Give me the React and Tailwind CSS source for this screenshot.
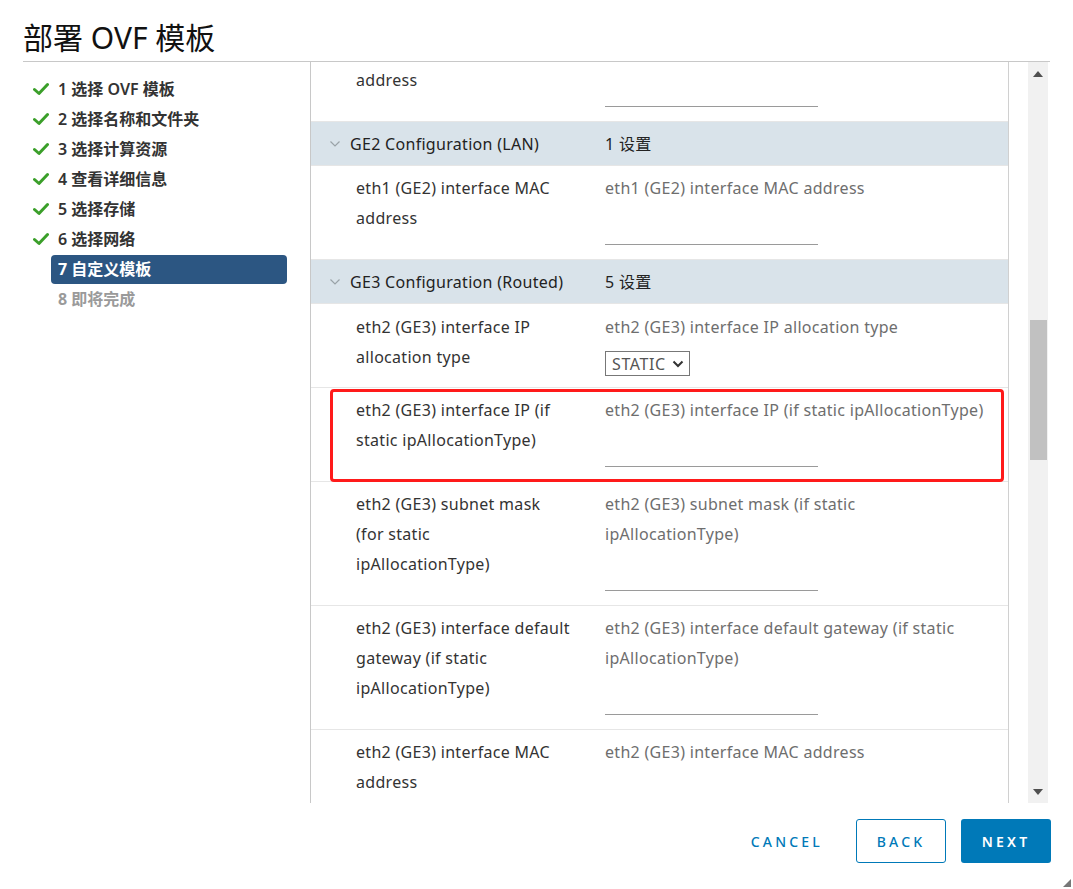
const font = { fontFamily: '"Noto Sans", "Noto Sans CJK SC", sans-serif' };

function Check() {
  return (
    <svg width="16" height="14" viewBox="0 0 16 14" className="shrink-0">
      <path d="M1.5 7.5 L6 11.5 L14.5 2.5" fill="none" stroke="#3b9f2a" strokeWidth="3" strokeLinecap="round" strokeLinejoin="round" />
    </svg>
  );
}

function Chevron() {
  return (
    <svg width="12" height="8" viewBox="0 0 12 8" className="shrink-0">
      <path d="M1.5 1.5 L6 6 L10.5 1.5" fill="none" stroke="#9aa3a8" strokeWidth="1.2" />
    </svg>
  );
}

const steps = [
  { n: 1, t: '选择 OVF 模板', done: true },
  { n: 2, t: '选择名称和文件夹', done: true },
  { n: 3, t: '选择计算资源', done: true },
  { n: 4, t: '查看详细信息', done: true },
  { n: 5, t: '选择存储', done: true },
  { n: 6, t: '选择网络', done: true },
  { n: 7, t: '自定义模板', active: true },
  { n: 8, t: '即将完成', todo: true },
];

function Lines({ items }) {
  return items.map((l, i) => (
    <div key={i} className="whitespace-nowrap">{l}</div>
  ));
}

function Field({ label, desc }) {
  return (
    <div className="flex border-b border-[#e6e6e6] pt-[7px] pb-[14px]">
      <div className="w-[294px] shrink-0 pl-[45px] text-[#333] leading-[30px]">
        <Lines items={label} />
      </div>
      <div className="flex-1">
        <div className="text-[#6e6e6e] leading-[30px]">
          <Lines items={desc} />
        </div>
        <div className="h-[42px] w-[213px] border-b border-[#9a9a9a]" />
      </div>
    </div>
  );
}

function Header({ title, count }) {
  return (
    <div className="flex h-[44px] items-center bg-[#d9e3ea] border-b border-[#e6e6e6]">
      <div className="w-[294px] shrink-0 flex items-center pl-[18px]">
        <Chevron />
        <span className="ml-[9px] text-[#222]">{title}</span>
      </div>
      <div className="text-[#222]">{count}</div>
    </div>
  );
}

export default function App() {
  return (
    <div className="w-[1073px] h-[889px] bg-white relative overflow-hidden text-[16px] tracking-[0.3px]" style={font}>
      <h1 className="pl-[23px] pt-[18px] h-[61px] text-[30px] leading-[40px] text-[#111] font-normal tracking-normal">部署 OVF 模板</h1>

      <div className="mx-[23px] flex h-[742px] border-t border-[#c8c8c8]">
        {/* steps */}
        <div className="w-[288px] shrink-0 border-r border-[#c8c8c8] pt-[12px] tracking-normal">
          {steps.map((s) => (
            <div key={s.n} className="flex items-center h-[30px]">
              <div className="w-[28px] pl-[10px] flex items-center">{s.done && <Check />}</div>
              <div
                className={
                  s.active
                    ? 'w-[236px] h-[29px] rounded-[4px] bg-[#2c5682] text-white font-bold text-[16px] pl-[7px] flex items-center'
                    : s.todo
                    ? 'pl-[7px] text-[#9a9a9a] font-bold text-[16px]'
                    : 'pl-[7px] text-[#333] font-semibold text-[16px]'
                }
              >
                {s.n} {s.t}
              </div>
            </div>
          ))}
        </div>

        {/* content */}
        <div className="flex-1 flex">
          <div className="w-[698px] border-r border-[#d0d0d0] overflow-hidden">
            <div className="flex border-b border-[#e6e6e6] pt-[3px] pb-[14px]">
              <div className="w-[294px] shrink-0 pl-[45px] text-[#333] leading-[30px]">address</div>
              <div className="flex-1">
                <div className="h-[42px] w-[213px] border-b border-[#9a9a9a]" />
              </div>
            </div>
            <Header title="GE2 Configuration (LAN)" count="1 设置" />
            <Field label={['eth1 (GE2) interface MAC', 'address']} desc={['eth1 (GE2) interface MAC address']} />
            <Header title="GE3 Configuration (Routed)" count="5 设置" />
            <div className="flex border-b border-[#e6e6e6] pt-[8px] pb-[11px]">
              <div className="w-[294px] shrink-0 pl-[45px] text-[#333] leading-[30px]">
                <Lines items={['eth2 (GE3) interface IP', 'allocation type']} />
              </div>
              <div className="flex-1">
                <div className="text-[#6e6e6e] leading-[30px]">eth2 (GE3) interface IP allocation type</div>
                <div className="mt-[9px] w-[85px] flex justify-between items-center h-[25px] border border-[#777] pl-[6px] pr-[5px] text-[#555] tracking-[0.6px]">
                  STATIC
                  <svg width="12" height="8" viewBox="0 0 12 8">
                    <path d="M1.5 1.5 L6 6 L10.5 1.5" fill="none" stroke="#333" strokeWidth="2" />
                  </svg>
                </div>
              </div>
            </div>
            <div className="relative">
              <Field
                label={['eth2 (GE3) interface IP (if', 'static ipAllocationType)']}
                desc={['eth2 (GE3) interface IP (if static ipAllocationType)']}
              />
              <div className="absolute left-[19px] top-[1px] w-[674px] h-[93px] border-[3px] border-[#ff1a1a] rounded-[4px]" />
            </div>
            <Field
              label={['eth2 (GE3) subnet mask', '(for static', 'ipAllocationType)']}
              desc={['eth2 (GE3) subnet mask (if static', 'ipAllocationType)']}
            />
            <Field
              label={['eth2 (GE3) interface default', 'gateway (if static', 'ipAllocationType)']}
              desc={['eth2 (GE3) interface default gateway (if static', 'ipAllocationType)']}
            />
            <Field label={['eth2 (GE3) interface MAC', 'address']} desc={['eth2 (GE3) interface MAC address']} />
          </div>
          <div className="w-[19px]" />
          {/* scrollbar */}
          <div className="w-[20px] bg-[#f1f1f1] flex flex-col items-center">
            <svg width="10" height="6" viewBox="0 0 10 6" className="mt-[9px]">
              <path d="M0 6 L5 0 L10 6 Z" fill="#505050" />
            </svg>
            <div className="mt-[243px] w-[17px] h-[140px] bg-[#c1c1c1]" />
            <div className="flex-1" />
            <svg width="10" height="6" viewBox="0 0 10 6" className="mb-[8px]">
              <path d="M0 0 L5 6 L10 0 Z" fill="#505050" />
            </svg>
          </div>
        </div>
      </div>

      {/* footer */}
      <div className="flex justify-end items-center pr-[22px] mt-[16px] text-[14px] tracking-[3.2px]">
        <button className="h-[44px] text-[#0079b8] font-medium mr-[33px]">CANCEL</button>
        <button className="h-[44px] w-[90px] border border-[#0079b8] rounded-[3px] text-[#0079b8] font-medium mr-[15px]">BACK</button>
        <button className="h-[44px] w-[90px] bg-[#0079b8] rounded-[3px] text-white font-semibold">NEXT</button>
      </div>
      <svg width="8" height="8" viewBox="0 0 8 8" className="absolute right-[2px] bottom-[2px]">
        <path d="M8 0 L8 8 L0 8 Z" fill="#777" />
      </svg>
    </div>
  );
}
